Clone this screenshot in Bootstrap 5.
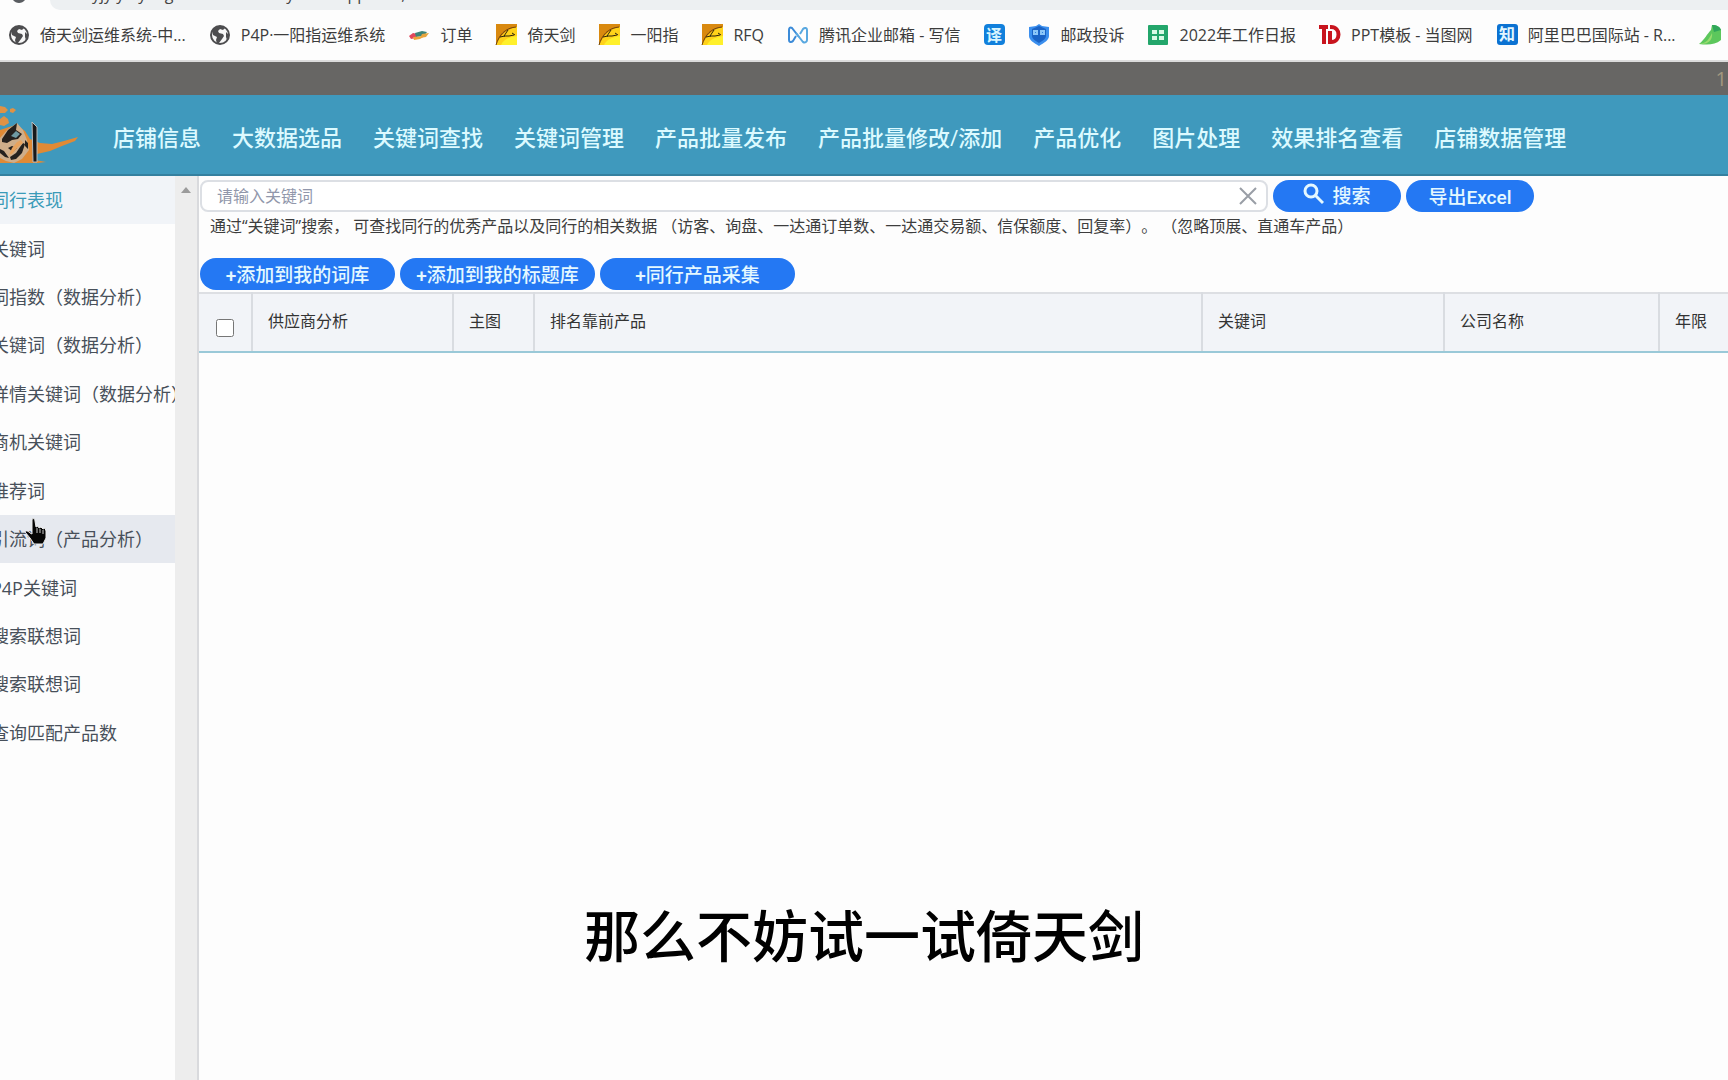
<!DOCTYPE html>
<html lang="zh-CN">
<head>
<meta charset="utf-8">
<meta name="viewport" content="width=device-width, initial-scale=1">
<title>倚天剑 - 同行表现</title>
<link href="https://cdn.jsdelivr.net/npm/bootstrap@5.3.0/dist/css/bootstrap.min.css" rel="stylesheet">
<style>
  body { font-family: "Open Sans", "Noto Sans CJK SC", sans-serif; font-size: 16px; line-height: 24px; background: #fdfdfd; color: #333; text-spacing-trim: space-all; }
  a { color: inherit; text-decoration: none; }
  .address-strip { height: 10px; }
  .address-strip svg { width: 50px; height: 10px; flex: none; }
  .address-box { height: 10px; background: #edf0f2; border-bottom-left-radius: 12px; line-height: 20px; padding-left: 42px; color: #444; }
  .address-box span { margin-top: -16px; }
  .bookmark-bar { height: 52px; padding: 0 0 0 8px; gap: 23px; color: #3c3c3c; border-bottom: 2px solid #dcdcdc; }
  .bookmark-bar a { gap: 10px; }
  .bookmark-bar svg { width: 22px; height: 22px; flex: none; }
  .notice-bar { height: 33px; background: #676664; color: #a3977f; font-size: 20px; padding-right: 1px; }
  .top-menu { height: 81px; background: #3f99bd; border-bottom: 2px solid #34809f; }
  .brand-art { width: 80px; height: 79px; margin-right: 33px; }
  .menu-links { gap: 31px; padding-top: 4px; font-size: 22px; font-weight: 500; color: #dcfaff; line-height: 32px; }
  .side-pane { width: 199px; background: #fdfdfd; }
  .side-menu { height: 581px; font-size: 18px; color: #48505a; }
  .side-menu a span { margin-left: -9px; }
  .side-menu .current { background: #f1f4f8; color: #3a9bb8; }
  .side-menu .hovered { background: #e6e9ef; }
  .scroll-track { width: 24px; background: #ededed; border-right: 2px solid #d9dadd; }
  .scroll-track svg { width: 10px; height: 6px; margin-top: 11px; margin-left: 6px; }
  .work-area { padding-top: 4px; }
  .tool-row { gap: 5px; padding-left: 1px; }
  .search-box { width: 1068px; height: 32px; border: 2px solid #dcdfe4; border-radius: 8px; background: #fff; }
  .search-box input { border: 0; outline: 0; background: none; padding: 0 15px; font-size: 16px; }
  .search-box input::placeholder { color: #9197ab; }
  .search-box button { border: 0; background: none; padding: 0 9px; line-height: 0; }
  .pill { height: 32px; padding: 3px 0 0; border: 0; border-radius: 16px; background: #2478f3; color: #e4f8ff; font-size: 19px; line-height: 29px; font-weight: 500; font-family: Roboto, "Noto Sans CJK SC", sans-serif; }
  .pill:hover { background: #1c6be0; color: #fff; }
  .pill-find { padding: 0; }
  .pill-find svg { margin-bottom: 5px; }
  .pill-short { width: 128px; }
  .pill-long { width: 195px; }
  .hint { gap: 4px; padding-left: 11px; height: 46px; padding-top: 2px; white-space: nowrap; color: #3d3d3d; }
  .result-table { table-layout: fixed; margin-top: 2px; color: #333; }
  .result-table th { height: 59px; padding: 0 15px 4px; background: #f2f4f8; border-top: 2px solid #dddfe3; border-right: 2px solid #d9dce1; border-bottom: 2px solid #9ac9d8; font-weight: 400; vertical-align: middle; white-space: nowrap; color: #333; }
  .result-table input { width: 18px; height: 18px; margin: 15px 0 0 2px; display: block; }
  .caption-line { position: absolute; left: 0; right: 0; bottom: 105px; font-size: 56px; line-height: 80px; font-weight: 500; color: #000; pointer-events: none; }
  .hand { position: absolute; left: 25px; top: 517px; width: 22px; height: 28px; }
</style>
</head>
<body class="vh-100 d-flex flex-column overflow-hidden position-relative">
<svg class="d-none">
  <symbol id="globe" viewBox="0 0 22 22"><circle cx="11" cy="11" r="9" fill="#f7f7f7" stroke="#4d4d4f" stroke-width="2"/><path d="M3 7c3-5 9-6 13-3l-2 2-3-1-2 2 1 2 4 1 1 2-2 3-3 4-2 1-1-4 1-3-4-2zM17 8l3 3-2 5-1-3z" fill="#4d4d4f"/></symbol>
  <symbol id="sword" viewBox="0 0 22 22"><path d="M1 0h21v21H1z" fill="#ffd21a"/><path d="M1 0h21v3C12 5 6 10 1 21z" fill="#d9890f"/><path d="M1 21C4 11 10 4 21 3" fill="none" stroke="#70430d" stroke-width="1"/><path d="M6 21c2-5 8-8 16-9v9z" fill="#fff02b"/><path d="M13 6l-4 6h5l5-1M5 13l5-1M17 9l3 2" fill="none" stroke="#2e260c" stroke-width="1"/></symbol>
</svg>

<div class="address-strip d-flex overflow-hidden flex-shrink-0">
  <svg viewBox="0 0 50 10"><path d="M13 0h12c-3 4-9 4-12 0z" fill="#5a5d61"/></svg>
  <div class="address-box d-flex flex-grow-1 overflow-hidden"><span>yjy.yinyang.com/web/#/keyword/appPeer,index</span></div>
</div>

<nav class="bookmark-bar d-flex align-items-center text-nowrap overflow-hidden flex-shrink-0" aria-label="书签">
  <a href="#" class="d-flex align-items-center"><svg><use href="#globe"/></svg>倚天剑运维系统-中...</a>
  <a href="#" class="d-flex align-items-center"><svg><use href="#globe"/></svg>P4P·一阳指运维系统</a>
  <a href="#" class="d-flex align-items-center"><svg viewBox="0 0 22 22"><path d="M1 12l4-3 5 1-2 4-5 1z" fill="#e2475c"/><path d="M7 9l7-2 5 1-3 4-8 1z" fill="#3d8579"/><path d="M14 10l7-1-3 4-6 1z" fill="#e5a63f"/><path d="M5 13l12-1-5 3-6 1z" fill="#f0a43a"/></svg>订单</a>
  <a href="#" class="d-flex align-items-center"><svg><use href="#sword"/></svg>倚天剑</a>
  <a href="#" class="d-flex align-items-center"><svg><use href="#sword"/></svg>一阳指</a>
  <a href="#" class="d-flex align-items-center"><svg><use href="#sword"/></svg>RFQ</a>
  <a href="#" class="d-flex align-items-center"><svg viewBox="0 0 22 22" fill="none" stroke-width="2"><path d="M12 13L5 4C3 3 2 4 2 6v10c0 2 2 3 4 1l3-5" stroke="#3c8bd8"/><path d="M9 9l7 9c2 1 4 0 4-2V6c0-2-2-3-4-1l-3 5" stroke="#58a8e0"/></svg>腾讯企业邮箱 - 写信</a>
  <a href="#" class="d-flex align-items-center" aria-label="翻译"><svg viewBox="0 0 22 22"><rect x="1" width="21" height="21" rx="4" fill="#1180dc"/><text x="11" y="17" text-anchor="middle" font-size="16" font-weight="700" fill="#d8f5ff">译</text></svg></a>
  <a href="#" class="d-flex align-items-center"><svg viewBox="0 0 22 22"><path d="M11 0l3 2 7 1v9c0 4-5 7-10 10C6 19 1 16 1 12V3l7-1z" fill="#3b8fee"/><path d="M11 2l7 3v7c0 3-4 5-7 7-3-2-7-4-7-7V5z" fill="#1a63c6"/><path d="M5 6h5v5H5zM12 6h5v5h-5z" fill="#8cc6f8"/><path d="M7 8h1v1H7zM14 8h1v1h-1z" fill="#2d80e4"/></svg>邮政投诉</a>
  <a href="#" class="d-flex align-items-center"><svg viewBox="0 0 22 22"><rect x="1" y="1" width="20" height="20" rx="1" fill="#23a66b"/><path d="M5 6h5v4H5zM12 6h5v4h-5zM5 12h5v4H5zM12 12h5v4h-5z" fill="#d9fae5"/></svg>2022年工作日报</a>
  <a href="#" class="d-flex align-items-center"><svg viewBox="0 0 22 22" fill="none" stroke="#c8141e" stroke-width="4"><path d="M0 3h9M5 3v17"/><path d="M11 3h1c10 0 10 15 0 15h-1V7" stroke-width="4"/></svg>PPT模板 - 当图网</a>
  <a href="#" class="d-flex align-items-center"><svg viewBox="0 0 22 22"><rect x="1" width="21" height="21" rx="3" fill="#0b72d2"/><text x="11" y="16" text-anchor="middle" font-size="16" font-weight="700" fill="#e2f7ff">知</text></svg>阿里巴巴国际站 - R...</a>
  <a href="#" class="d-flex align-items-center" aria-label="书签"><svg viewBox="0 0 22 22"><path d="M0 20C6 15 8 10 12 6l1-5c5 0 8 2 9 5v10c-6 5-13 5-22 4z" fill="#5cc75c"/><path d="M13 1c5 0 8 2 9 5l-7 2z" fill="#2fa65a"/><path d="M0 20c8-1 10-5 13-11 1 6-3 12-13 11z" fill="#98dc6e"/></svg></a>
</nav>

<div class="notice-bar d-flex align-items-center justify-content-end flex-shrink-0">1</div>

<header class="top-menu d-flex align-items-center overflow-hidden flex-shrink-0">
  <svg class="brand-art flex-shrink-0" viewBox="0 0 80 79">
    <path d="M0 11l5 1 3 3-3 3-5 0zM10 14l3-1 3 2-3 3-3-1zM0 24l4-3 4 3 1 4-5 3-4-1z" fill="#df9245"/>
    <path d="M0 35l9-3 8-2 8 6 5 8 10 4 12 1 12-3 14-4-3 4-13 5-12 5-13 3-2 6 11 2-8 1H0z" fill="#e08a35"/>
    <path d="M0 43l8-9 9-6 6 7 4 10 2 10-7 9-8 4-8-2-6-3z" fill="#cfae8a"/>
    <path d="M2 44l6-9 9-7-1 7 6 4-4 5-6 1-5 3-5-1z" fill="#25211e"/>
    <path d="M11 41l5-5 4 3-4 4z" fill="#6f9aa3"/>
    <path d="M0 54l4 2 5 7-4-1-5-4zM8 53l4-2 5 2-4 4zM10 62l6-4 4-6 3-4 2 1-3 9-6 6-5 1zM25 45l3 3 0 6-3-3z" fill="#25211e"/>
    <path d="M17 47l4-2 2 3-5 4-6 7-3 1 3-7z" fill="#e8a35e"/>
    <path d="M32 27l5 5v35l-4 0z" fill="#18191b" stroke="#b9bcbd" stroke-width="1"/>
  </svg>
  <nav class="menu-links d-flex text-nowrap">
    <a href="#">店铺信息</a><a href="#">大数据选品</a><a href="#">关键词查找</a><a href="#">关键词管理</a><a href="#">产品批量发布</a><a href="#">产品批量修改/添加</a><a href="#">产品优化</a><a href="#">图片处理</a><a href="#">效果排名查看</a><a href="#">店铺数据管理</a>
  </nav>
</header>

<div class="d-flex flex-grow-1 overflow-hidden">
  <aside class="side-pane d-flex flex-shrink-0">
    <nav class="side-menu d-flex flex-column flex-grow-1 overflow-hidden text-nowrap">
      <a href="#" class="current flex-fill d-flex align-items-center"><span>同行表现</span></a>
      <a href="#" class="flex-fill d-flex align-items-center"><span>关键词</span></a>
      <a href="#" class="flex-fill d-flex align-items-center"><span>词指数（数据分析）</span></a>
      <a href="#" class="flex-fill d-flex align-items-center"><span>关键词（数据分析）</span></a>
      <a href="#" class="flex-fill d-flex align-items-center"><span>详情关键词（数据分析）</span></a>
      <a href="#" class="flex-fill d-flex align-items-center"><span>商机关键词</span></a>
      <a href="#" class="flex-fill d-flex align-items-center"><span>推荐词</span></a>
      <a href="#" class="hovered flex-fill d-flex align-items-center"><span>引流词（产品分析）</span></a>
      <a href="#" class="flex-fill d-flex align-items-center"><span>P4P关键词</span></a>
      <a href="#" class="flex-fill d-flex align-items-center"><span>搜索联想词</span></a>
      <a href="#" class="flex-fill d-flex align-items-center"><span>搜索联想词</span></a>
      <a href="#" class="flex-fill d-flex align-items-center"><span>查询匹配产品数</span></a>
    </nav>
    <div class="scroll-track d-flex flex-shrink-0"><svg viewBox="0 0 10 6"><path d="M5 0l5 6H0z" fill="#9b9b9b"/></svg></div>
  </aside>

  <main class="work-area flex-grow-1 overflow-hidden">
    <div class="tool-row d-flex">
      <div class="search-box d-flex align-items-center">
        <input type="text" class="flex-grow-1" placeholder="请输入关键词" aria-label="关键词">
        <button type="button" aria-label="清除"><svg width="18" height="18" viewBox="0 0 18 18"><path d="M1 1l16 16M17 1L1 17" stroke="#999ea6" stroke-width="2"/></svg></button>
      </div>
      <button type="button" class="btn pill pill-find pill-short d-flex align-items-center justify-content-center gap-2"><svg width="21" height="22" viewBox="0 0 21 22" fill="none" stroke="#e4f8ff" stroke-width="3"><circle cx="8" cy="8" r="6"/><path d="M12 12l8 8"/></svg>搜索</button>
      <button type="button" class="btn pill pill-short">导出Excel</button>
    </div>
    <div class="hint d-flex"><span>通过“关键词”搜索，</span><span>可查找同行的优秀产品以及同行的相关数据</span><span>（访客、询盘、一达通订单数、一达通交易额、信保额度、回复率）。</span><span>（忽略顶展、直通车产品）</span></div>
    <div class="tool-row d-flex">
      <button type="button" class="btn pill pill-long">+添加到我的词库</button>
      <button type="button" class="btn pill pill-long">+添加到我的标题库</button>
      <button type="button" class="btn pill pill-long">+同行产品采集</button>
    </div>
    <table class="result-table w-100">
      <colgroup><col style="width:53px"><col style="width:201px"><col style="width:81px"><col style="width:668px"><col style="width:242px"><col style="width:215px"><col></colgroup>
      <thead><tr><th><input type="checkbox" aria-label="全选"></th><th>供应商分析</th><th>主图</th><th>排名靠前产品</th><th>关键词</th><th>公司名称</th><th class="border-end-0">年限</th></tr></thead>
    </table>
  </main>
</div>

<svg class="hand" viewBox="0 0 22 28"><path d="M7 2c2-1 3 0 3 2l1 6 2-1 1 2 2-1 2 2 2-1 1 3v7l-3 6H9L5 21l-5-6c1-2 3-1 5 1l2 1z" fill="#050505" stroke="#eee" stroke-width="1"/><path d="M12 11v5M15 12v4M18 13v4" stroke="#ccc" stroke-width="1"/></svg>
<div class="caption-line text-center">那么不妨试一试倚天剑</div>
<script src="https://cdn.jsdelivr.net/npm/bootstrap@5.3.0/dist/js/bootstrap.bundle.min.js"></script>
</body>
</html>
